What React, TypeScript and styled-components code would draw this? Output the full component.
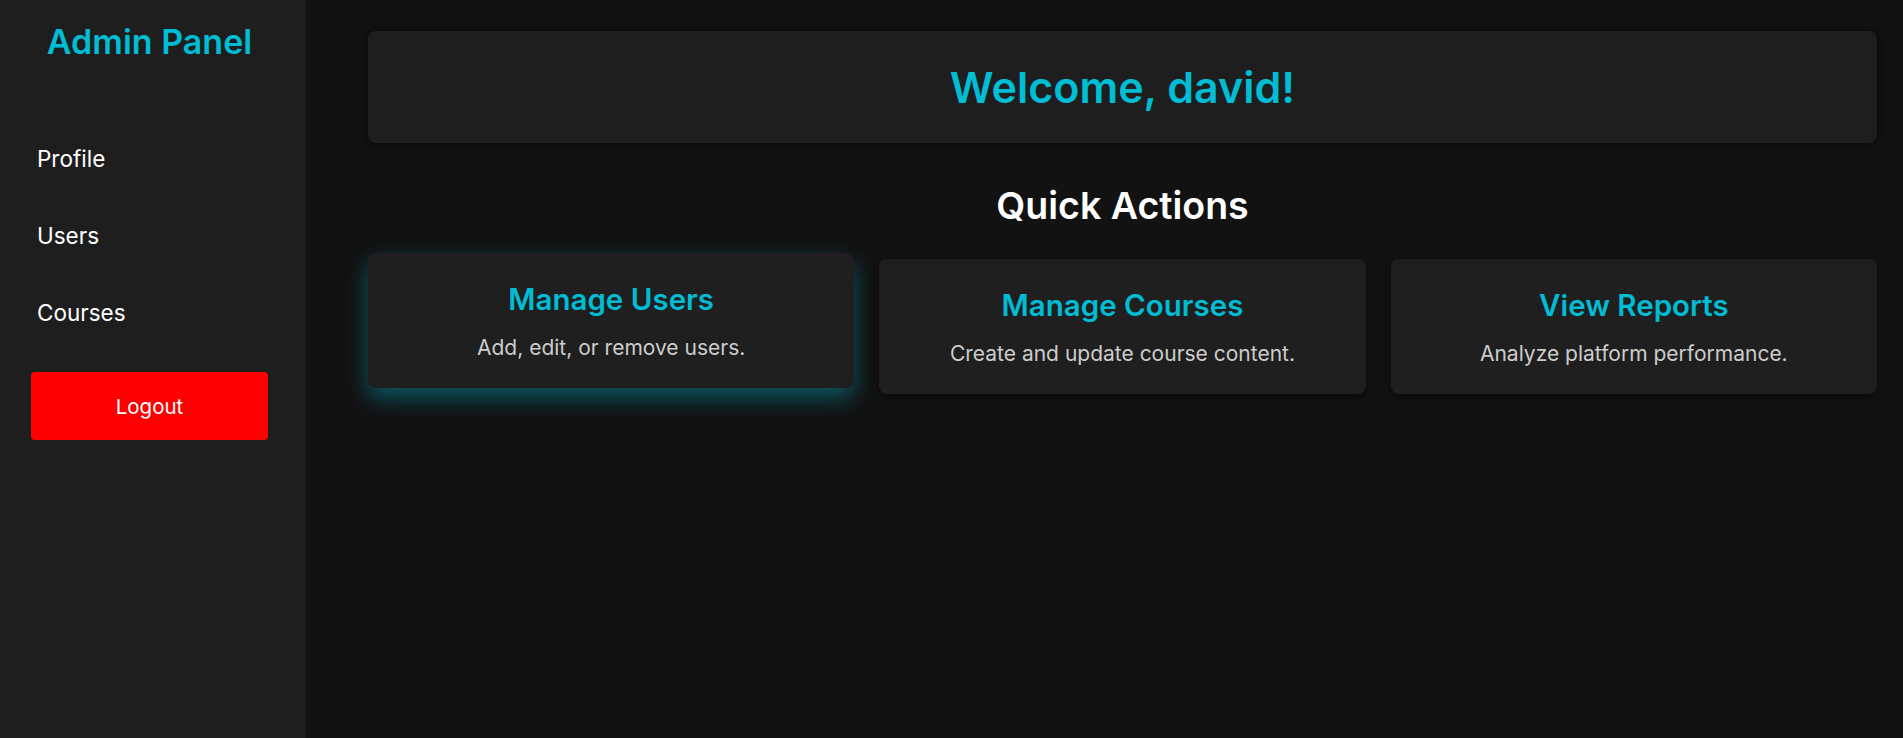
import React from "react";
import styled, { createGlobalStyle } from "styled-components";

const GlobalStyle = createGlobalStyle`
  * {
    box-sizing: border-box;
  }

  body {
    margin: 0;
    background: #121212;
    font-family: "Inter", "Noto Sans", sans-serif;
    color: #fff;
  }
`;

const actions = [
  { title: "Manage Users", text: "Add, edit, or remove users.", active: true },
  { title: "Manage Courses", text: "Create and update course content." },
  { title: "View Reports", text: "Analyze platform performance." },
];

const navItems = ["Profile", "Users", "Courses"];

function App() {
  return (
    <Layout>
      <GlobalStyle />
      <Sidebar>
        <Brand>Admin Panel</Brand>
        <NavList>
          {navItems.map((item) => (
            <NavItem key={item}>{item}</NavItem>
          ))}
        </NavList>
        <LogoutButton>Logout</LogoutButton>
      </Sidebar>

      <Main>
        <WelcomeCard>
          <h1>Welcome, david!</h1>
        </WelcomeCard>

        <SectionTitle>Quick Actions</SectionTitle>

        <ActionGrid>
          {actions.map((action) => (
            <ActionCard key={action.title} $active={action.active}>
              <h3>{action.title}</h3>
              <p>{action.text}</p>
            </ActionCard>
          ))}
        </ActionGrid>
      </Main>
    </Layout>
  );
}

const Layout = styled.div`
  display: flex;
  min-height: 100vh;
`;

const Sidebar = styled.aside`
  width: 306px;
  flex-shrink: 0;
  background: #1e1e1e;
  padding: 22px 38px 0 31px;
  display: flex;
  flex-direction: column;
`;

const Brand = styled.h2`
  margin: 0;
  text-align: center;
  font-size: 34px;
  line-height: 40px;
  font-weight: 600;
  color: #00bcd4;
  white-space: nowrap;
`;

const NavList = styled.ul`
  list-style: none;
  margin: 58px 0 0;
  padding: 0;
`;

const NavItem = styled.li`
  padding: 24px 6px;
  font-size: 22.5px;
  line-height: 29px;
  color: #fff;
  cursor: pointer;
`;

const LogoutButton = styled.button`
  margin-top: 21px;
  height: 68px;
  width: 100%;
  border: none;
  border-radius: 4px;
  background: #ff0000;
  color: #fff;
  font-family: inherit;
  font-size: 20.5px;
  cursor: pointer;
`;

const Main = styled.main`
  flex: 1;
  padding: 31px 26px 40px 62px;
`;

const WelcomeCard = styled.section`
  background: #1e1e1e;
  border-radius: 8px;
  box-shadow: 0 0 12px rgba(0, 0, 0, 0.6);
  padding: 30px 20px;
  text-align: center;

  h1 {
    margin: 0;
    font-size: 43px;
    line-height: 52px;
    font-weight: 600;
    color: #00bcd4;
  }
`;

const SectionTitle = styled.h2`
  margin: 41px 0 31px;
  text-align: center;
  font-size: 37.5px;
  line-height: 44px;
  font-weight: 600;
  color: #fff;
`;

const ActionGrid = styled.div`
  display: grid;
  grid-template-columns: repeat(3, 1fr);
  gap: 25px;
`;

const ActionCard = styled.div<{ $active?: boolean }>`
  background: #1f1f1f;
  border-radius: 8px;
  padding: 28px 20px 22px;
  text-align: center;
  box-shadow: ${({ $active }) =>
    $active ? "0 10px 22px rgba(0, 188, 212, 0.4)" : "0 4px 10px rgba(0, 0, 0, 0.35)"};
  transform: ${({ $active }) => ($active ? "translateY(-6px)" : "none")};
  cursor: pointer;

  h3 {
    margin: 0 0 13px;
    font-size: 29.5px;
    line-height: 36px;
    font-weight: 600;
    color: #00bcd4;
  }

  p {
    margin: 0;
    font-size: 21px;
    line-height: 36px;
    color: #cccccc;
  }
`;

export default App;
